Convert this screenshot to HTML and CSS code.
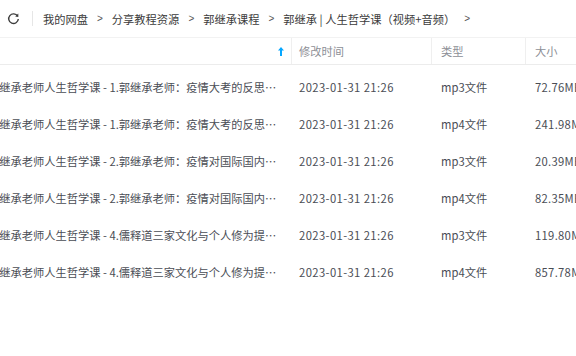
FILE: index.html
```html
<!DOCTYPE html>
<html lang="zh">
<head>
<meta charset="utf-8">
<link rel="stylesheet" href="styles.css">
</head>
<body>
<div class="page">
  <div class="crumbbar">
    <span class="refresh">
      <svg width="13" height="13" viewBox="0 0 13 13"><path d="M10.6 4.2A4.8 4.8 0 1 0 11.3 7" fill="none" stroke="#3d3d3d" stroke-width="1.4"/><path d="M8.2 4.6L11.3 4.9L11.3 1.6Z" fill="#3d3d3d"/></svg>
    </span>
    <span class="vsep"></span>
    <nav class="crumbs">
      <span>我的网盘</span><span class="gt">&gt;</span>
      <span>分享教程资源</span><span class="gt">&gt;</span>
      <span>郭继承课程</span><span class="gt">&gt;</span>
      <span>郭继承 | 人生哲学课（视频+音频）</span><span class="gt">&gt;</span>
    </nav>
  </div>
  <div class="list">
    <div class="head">
      <div class="col c-name"><span class="sort">
        <svg width="6" height="9" viewBox="0 0 6 9"><path d="M3 0L6 3.6H4V9H2V3.6H0Z" fill="#06a7ff"/></svg>
      </span></div>
      <div class="col c-date">修改时间</div>
      <div class="col c-type">类型</div>
      <div class="col c-size">大小</div>
    </div>
    <div class="rows">
      <div class="row"><div class="name">郭继承老师人生哲学课 - 1.郭继承老师：疫情大考的反思与启示.mp3</div><div class="date">2023-01-31 21:26</div><div class="type">mp3文件</div><div class="size">72.76MB</div></div>
      <div class="row"><div class="name">郭继承老师人生哲学课 - 1.郭继承老师：疫情大考的反思与启示.mp4</div><div class="date">2023-01-31 21:26</div><div class="type">mp4文件</div><div class="size">241.98MB</div></div>
      <div class="row"><div class="name">郭继承老师人生哲学课 - 2.郭继承老师：疫情对国际国内格局的影响.mp3</div><div class="date">2023-01-31 21:26</div><div class="type">mp3文件</div><div class="size">20.39MB</div></div>
      <div class="row"><div class="name">郭继承老师人生哲学课 - 2.郭继承老师：疫情对国际国内格局的影响.mp4</div><div class="date">2023-01-31 21:26</div><div class="type">mp4文件</div><div class="size">82.35MB</div></div>
      <div class="row"><div class="name">郭继承老师人生哲学课 - 4.儒释道三家文化与个人修为提升.mp3</div><div class="date">2023-01-31 21:26</div><div class="type">mp3文件</div><div class="size">119.80MB</div></div>
      <div class="row"><div class="name">郭继承老师人生哲学课 - 4.儒释道三家文化与个人修为提升.mp4</div><div class="date">2023-01-31 21:26</div><div class="type">mp4文件</div><div class="size">857.78MB</div></div>
    </div>
  </div>
</div>
</body>
</html>
```
FILE: styles.css
```css
html, body {
  margin: 0;
  padding: 0;
  background: #ffffff;
}
body {
  font-family: "Noto Sans CJK SC", "Noto Sans", sans-serif;
  font-size: 11.25px;
  color: #4a4d55;
  width: 576px;
  height: 356px;
  overflow: hidden;
}
.crumbbar {
  display: flex;
  align-items: center;
  height: 37px;
  padding-left: 7px;
  box-sizing: border-box;
}
.refresh {
  display: flex;
  width: 13px;
  height: 13px;
}
.vsep {
  width: 1px;
  height: 15px;
  background: #e6e6e6;
  margin-left: 12px;
  margin-right: 10px;
}
.crumbs {
  display: flex;
  align-items: center;
  color: #3b3b3b;
  white-space: nowrap;
}
.gt {
  margin: 0 9px;
  color: #555;
  font-family: "Liberation Sans", sans-serif;
  font-size: 10px;
}
.head {
  display: grid;
  grid-template-columns: 291px 140px 94px 1fr;
  height: 28px;
  border-top: 1px solid #f2f2f2;
  border-bottom: 1px solid #ececec;
  box-sizing: border-box;
  color: #8d8f96;
}
.col {
  display: flex;
  align-items: center;
  padding-left: 7px;
}
.head .c-type, .head .c-size {
  padding-left: 9px;
}
.c-date, .c-type, .c-size {
  border-left: 1px solid #efefef;
}
.c-name {
  justify-content: flex-end;
  padding-right: 7px;
}
.sort {
  display: flex;
}
.rows {
  padding-top: 3px;
}
.row {
  display: grid;
  grid-template-columns: 291px 140px 94px 1fr;
  height: 37px;
  align-items: center;
  white-space: nowrap;
}
.name {
  overflow: hidden;
  text-overflow: ellipsis;
  text-indent: -12px;
  padding-right: 10px;
}
.date {
  padding-left: 8px;
  letter-spacing: 0.4px;
}
.type {
  padding-left: 10px;
}
.size {
  padding-left: 10px;
  overflow: hidden;
  letter-spacing: 0.3px;
}
```
